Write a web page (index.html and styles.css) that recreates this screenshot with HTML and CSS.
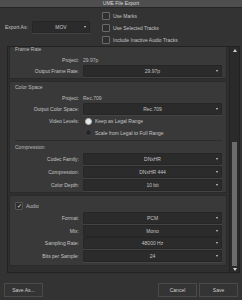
FILE: index.html
```html
<!DOCTYPE html>
<html lang="en">
<head>
  <meta charset="UTF-8">
  <title>UME File Export</title>
  <link rel="stylesheet" href="styles.css">
</head>
<body>
  <div class="titlebar">UME File Export</div>

  <!-- Export type and options -->
  <div class="top">
    <div class="export-as">
      <span class="label-top">Export As:</span>
      <div class="select select-small">MOV<span class="arrow"></span></div>
    </div>
    <div class="options">
      <div class="check-row"><span class="box"></span>Use Marks</div>
      <div class="check-row"><span class="box"></span>Use Selected Tracks</div>
      <div class="check-row"><span class="box"></span>Include Inactive Audio Tracks</div>
    </div>
  </div>

  <!-- Scrolling settings area -->
  <div class="scroller">
    <div class="content">
      <div class="section section-first">
        <div class="heading">Frame Rate</div>
        <div class="row row-info"><span class="label">Project:</span><span class="value">29.97p</span></div>
        <div class="row row-short"><span class="label">Output Frame Rate:</span><div class="select">29.97p<span class="arrow"></span></div></div>
      </div>

      <div class="section">
        <div class="heading">Color Space</div>
        <div class="row row-info"><span class="label">Project:</span><span class="value">Rec.709</span></div>
        <div class="row row-short"><span class="label">Output Color Space:</span><div class="select">Rec.709<span class="arrow"></span></div></div>
        <div class="row row-radio first-radio"><span class="label">Video Levels:</span><span class="radio on"></span>Keep as Legal Range</div>
        <div class="row row-radio"><span class="label"></span><span class="radio"></span>Scale from Legal to Full Range</div>
        <div class="divider"></div>
        <div class="heading">Compression</div>
        <div class="row"><span class="label">Codec Family:</span><div class="select">DNxHR<span class="arrow"></span></div></div>
        <div class="row"><span class="label">Compression:</span><div class="select">DNxHR 444<span class="arrow"></span></div></div>
        <div class="row"><span class="label">Color Depth:</span><div class="select">10 bit<span class="arrow"></span></div></div>
      </div>

      <div class="section section-audio">
        <div class="heading check-heading"><span class="box checked">&#10003;</span>Audio</div>
        <div class="row"><span class="label">Format:</span><div class="select">PCM<span class="arrow"></span></div></div>
        <div class="row"><span class="label">Mix:</span><div class="select">Mono<span class="arrow"></span></div></div>
        <div class="row"><span class="label">Sampling Rate:</span><div class="select">48000 Hz<span class="arrow"></span></div></div>
        <div class="row"><span class="label">Bits per Sample:</span><div class="select">24<span class="arrow"></span></div></div>
      </div>
    </div>

    <div class="scrollbar">
      <span class="scroll-up"></span>
      <div class="track"><div class="thumb"></div></div>
      <span class="scroll-down"></span>
    </div>
  </div>

  <!-- Dialog buttons -->
  <div class="buttons">
    <button class="btn">Save As...</button>
    <div class="spacer"></div>
    <button class="btn">Cancel</button>
    <button class="btn">Save</button>
  </div>
</body>
</html>
```

FILE: styles.css
```css
body {
  margin: 0;
  width: 242px;
  height: 300px;
  overflow: hidden;
  background-color: #333333;
  color: #c4c4c4;
  font-family: "Liberation Sans", Arial, sans-serif;
  font-size: 5px;
  display: flex;
  flex-direction: column;
}

.titlebar {
  height: 7px;
  line-height: 7px;
  flex: none;
  background-color: #4e4e4e;
  color: #d8d8d8;
  text-align: center;
  border-bottom: 1px solid #262626;
}

/* Top area */
.top {
  height: 38px;
  flex: none;
  display: flex;
  padding: 0 0 0 5px;
}

.export-as {
  display: flex;
  align-items: center;
  width: 97px;
}

.label-top {
  width: 27px;
}

.select {
  position: relative;
  flex: 1;
  height: 10px;
  line-height: 10px;
  text-align: center;
  background-color: #2b2b2b;
  border: 1px solid #262626;
  box-shadow: 0 1px 0 #444;
  border-radius: 1px;
}

.select-small {
  flex: none;
  width: 56px;
}

.arrow {
  position: absolute;
  right: 3px;
  top: 4px;
  border-left: 1.5px solid transparent;
  border-right: 1.5px solid transparent;
  border-top: 2px solid #cfcfcf;
}

.options {
  display: flex;
  flex-direction: column;
  padding-top: 2px;
}

.check-row {
  height: 12px;
  display: flex;
  align-items: center;
}

.box {
  width: 6px;
  height: 6px;
  border: 1px solid #6a6a6a;
  border-radius: 1px;
  margin-right: 3px;
  background-color: #2f2f2f;
}

.box.checked {
  border-color: #555;
  color: #e0e0e0;
  font-size: 6px;
  line-height: 6px;
  text-align: center;
}

/* Scroll area */
.scroller {
  display: flex;
  height: 225px;
  flex: none;
  margin: 0 2px 0 7px;
  border: 1px solid #222;
  background-color: #2f2f2f;
}

.content {
  flex: 1;
  overflow: hidden;
  padding: 0 2px 0 1px;
}

.section {
  background-color: #393939;
  border: 1px solid #2a2a2a;
  padding: 0 4px 1px 4px;
  margin-bottom: 2px;
}

.section-first {
  margin-top: -4px;
}

.heading {
  height: 10px;
  line-height: 10px;
  padding-left: 1px;
  color: #bdbdbd;
}

.check-heading {
  display: flex;
  align-items: center;
  height: 13px;
}

.row {
  display: flex;
  align-items: center;
  height: 13px;
}

.row-info {
  height: 11px;
}

.row-short {
  height: 12px;
}

.row-radio {
  height: 11px;
}

.first-radio {
  height: 12px;
}

.label {
  width: 65px;
  text-align: right;
  margin-right: 4px;
  flex: none;
}

.value {
  color: #bbb;
}

.radio {
  width: 5px;
  height: 5px;
  border-radius: 50%;
  background-color: #262626;
  border: 1px solid #444;
  margin: 0 3px 0 2px;
}

.radio.on {
  background-color: #e6e6e6;
  border-color: #bbb;
}

.divider {
  height: 1px;
  background-color: #2c2c2c;
  margin: 2px 0 1px 1px;
}

.section-audio {
  padding-top: 3px;
  padding-bottom: 3px;
}

.section-audio .row {
  height: 12.5px;
}

/* Scrollbar */
.scrollbar {
  width: 9px;
  display: flex;
  flex-direction: column;
  align-items: center;
  background-color: #2a2a2a;
  border-left: 1px solid #222;
}

.scroll-up,
.scroll-down {
  height: 6px;
  width: 5px;
  display: flex;
  align-items: center;
  justify-content: center;
}

.scroll-up::after {
  content: "";
  border-left: 2px solid transparent;
  border-right: 2px solid transparent;
  border-bottom: 3px solid #d0d0d0;
}

.scroll-down::after {
  content: "";
  border-left: 2px solid transparent;
  border-right: 2px solid transparent;
  border-top: 3px solid #d0d0d0;
}

.track {
  flex: 1;
  width: 5px;
  display: flex;
  flex-direction: column;
  justify-content: flex-end;
}

.thumb {
  height: 124px;
  background-color: #6c6c6c;
}

/* Buttons */
.buttons {
  display: flex;
  padding: 10px 4px 0 4px;
  gap: 2px;
}

.spacer {
  flex: 1;
}

.btn {
  width: 39px;
  height: 14px;
  padding: 0;
  background-color: #343434;
  border: 1px solid #4a4a4a;
  color: #cfcfcf;
  font-family: "Liberation Sans", Arial, sans-serif;
  font-size: 5px;
}
```
